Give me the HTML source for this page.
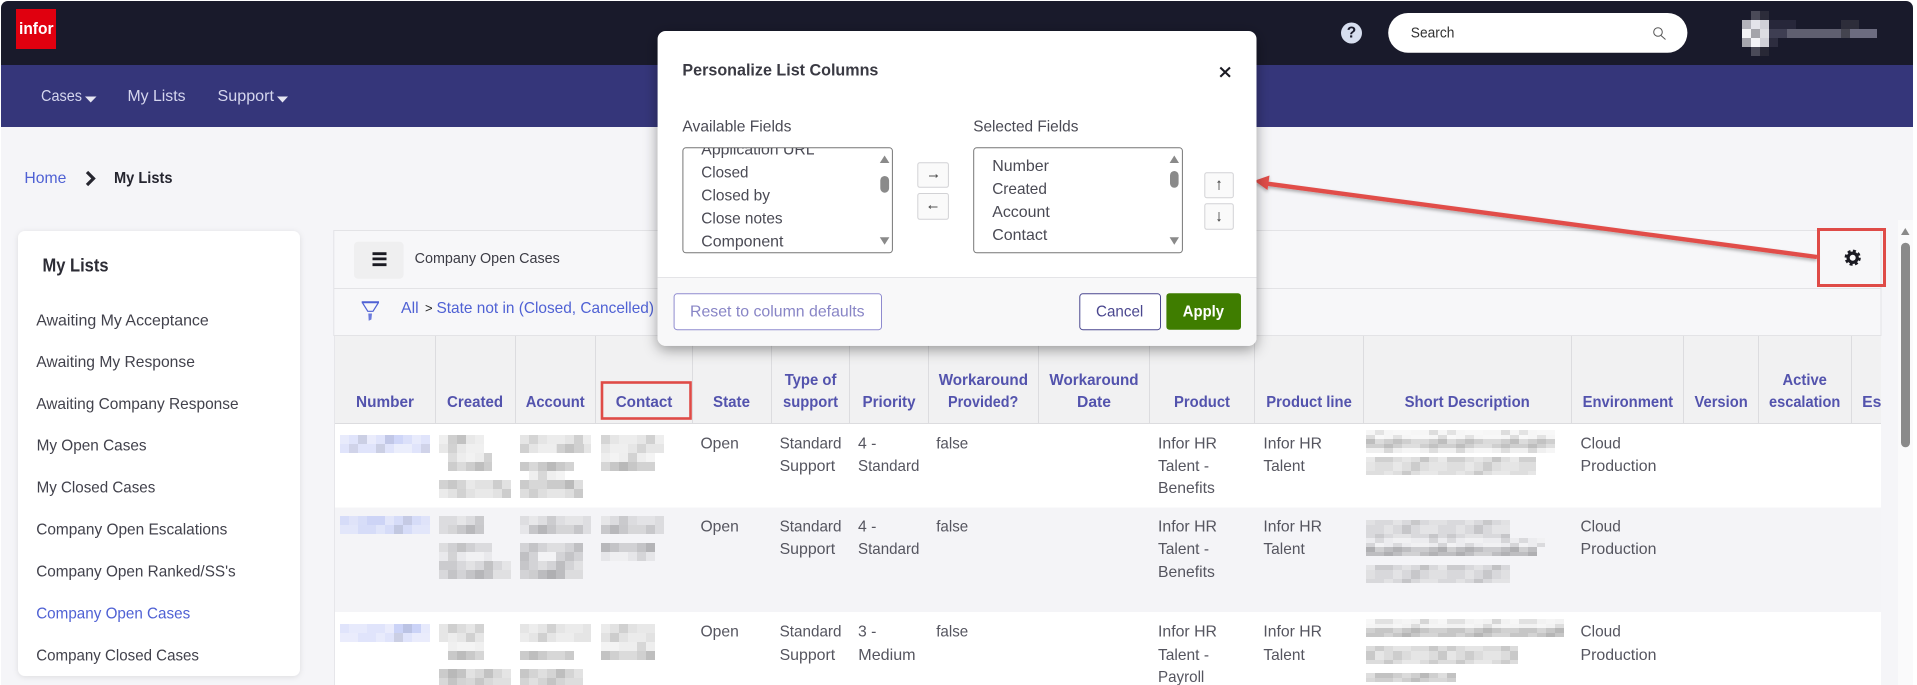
<!DOCTYPE html>
<html><head><meta charset="utf-8"><title>Personalize List Columns</title>
<style>
html,body{margin:0;padding:0;background:#fff;width:1917px;height:685px;overflow:hidden}
svg{display:block;font-family:"Liberation Sans",sans-serif}
svg text{transform:translateY(-0.9px)}
.c{font-size:16px;fill:#55555f}
.l{font-size:16px;fill:#42424c}
.h{font-size:16px;font-weight:bold;fill:#5353ad}
.n{font-size:16px;fill:#d5d6ee}
.b{fill:#4f61d4;font-size:16px}
.m{font-size:16px;fill:#4a4a54}
</style></head><body>
<svg width="1917" height="685" viewBox="0 0 1917 685" xmlns="http://www.w3.org/2000/svg">
<defs>
<filter id="sh" x="-10%" y="-10%" width="120%" height="125%"><feDropShadow dx="0" dy="4" stdDeviation="7" flood-color="#000" flood-opacity=".38"/></filter>
<filter id="sc" x="-10%" y="-10%" width="120%" height="120%"><feDropShadow dx="0" dy="1" stdDeviation="3" flood-color="#000" flood-opacity=".1"/></filter>
<filter id="as" x="-5%" y="-20%" width="110%" height="150%"><feDropShadow dx="0" dy="2" stdDeviation="1.5" flood-color="#000" flood-opacity=".3"/></filter>
<clipPath id="lb1"><rect x="683" y="148" width="190" height="104"/></clipPath>
<clipPath id="lb2"><rect x="974" y="148" width="190" height="104"/></clipPath>
<clipPath id="esc"><rect x="1852" y="336" width="29" height="88"/></clipPath>
<pattern id="mos" patternUnits="userSpaceOnUse" x="7" y="3" width="72" height="54">
<rect width="9" height="9" fill="#fff" fill-opacity=".35"/><rect x="18" width="9" height="9" fill="#000" fill-opacity=".08"/><rect x="36" width="18" height="9" fill="#fff" fill-opacity=".3"/><rect x="63" width="9" height="9" fill="#000" fill-opacity=".1"/>
<rect x="9" y="9" width="9" height="9" fill="#000" fill-opacity=".1"/><rect x="27" y="9" width="18" height="9" fill="#fff" fill-opacity=".4"/><rect x="54" y="9" width="9" height="9" fill="#000" fill-opacity=".08"/>
<rect y="18" width="18" height="9" fill="#000" fill-opacity=".07"/><rect x="27" y="18" width="9" height="9" fill="#fff" fill-opacity=".3"/><rect x="45" y="18" width="9" height="9" fill="#000" fill-opacity=".12"/><rect x="63" y="18" width="9" height="9" fill="#fff" fill-opacity=".4"/>
<rect x="18" y="27" width="9" height="9" fill="#fff" fill-opacity=".35"/><rect x="36" y="27" width="9" height="9" fill="#000" fill-opacity=".09"/><rect x="54" y="27" width="18" height="9" fill="#fff" fill-opacity=".25"/>
<rect x="9" y="36" width="9" height="9" fill="#fff" fill-opacity=".3"/><rect x="27" y="36" width="9" height="9" fill="#000" fill-opacity=".1"/><rect x="45" y="36" width="18" height="9" fill="#fff" fill-opacity=".35"/>
<rect y="45" width="9" height="9" fill="#000" fill-opacity=".08"/><rect x="18" y="45" width="18" height="9" fill="#fff" fill-opacity=".3"/><rect x="54" y="45" width="9" height="9" fill="#000" fill-opacity=".1"/>
</pattern>
<g id="blocks">
<rect x="340" y="435" width="90" height="18" fill="#e0e4fb"/><rect x="385" y="435" width="27" height="9" fill="#cfd6f8"/>
<rect x="340" y="516" width="90" height="18" fill="#d6dcf8"/><rect x="358" y="516" width="27" height="9" fill="#cdd4f6"/>
<rect x="340" y="624" width="90" height="18" fill="#e0e4fb"/><rect x="394" y="624" width="27" height="9" fill="#cbd3f7"/>

<rect x="439" y="435" width="45" height="18" fill="#e8e8e8"/><rect x="448" y="435" width="18" height="9" fill="#cfcfcf"/>
<rect x="448" y="453" width="44" height="9" fill="#ededed"/><rect x="448" y="462" width="44" height="9" fill="#cdcdcd"/>
<rect x="439" y="480" width="72" height="18" fill="#e2e2e2"/><rect x="448" y="480" width="18" height="9" fill="#c8c8c8"/>
<rect x="520" y="435" width="71" height="18" fill="#e5e5e5"/><rect x="557" y="444" width="27" height="9" fill="#d0d0d0"/>
<rect x="520" y="462" width="54" height="9" fill="#c9c9c9"/><rect x="529" y="471" width="36" height="9" fill="#efefef"/>
<rect x="520" y="480" width="63" height="18" fill="#dedede"/><rect x="520" y="480" width="54" height="9" fill="#cbcbcb"/>
<rect x="601" y="435" width="63" height="18" fill="#e6e6e6"/><rect x="601" y="453" width="54" height="9" fill="#eeeeee"/><rect x="601" y="462" width="54" height="9" fill="#c7c7c7"/>

<rect x="439" y="516" width="45" height="18" fill="#dcdcdf"/><rect x="448" y="525" width="36" height="9" fill="#c8c8cb"/>
<rect x="439" y="543" width="53" height="9" fill="#d0d0d3"/><rect x="439" y="552" width="53" height="9" fill="#e9e9ec"/>
<rect x="439" y="561" width="72" height="18" fill="#d8d8db"/><rect x="448" y="570" width="45" height="9" fill="#c4c4c7"/>
<rect x="520" y="516" width="71" height="18" fill="#dedee1"/><rect x="529" y="525" width="54" height="9" fill="#c6c6c9"/>
<rect x="520" y="543" width="63" height="36" fill="#d3d3d6"/><rect x="538" y="552" width="18" height="9" fill="#ececef"/><rect x="529" y="570" width="36" height="9" fill="#bcbcbf"/>
<rect x="601" y="516" width="63" height="18" fill="#dcdcdf"/><rect x="601" y="525" width="54" height="9" fill="#c8c8cb"/>
<rect x="601" y="543" width="54" height="9" fill="#c4c4c7"/><rect x="601" y="552" width="54" height="9" fill="#e6e6e9"/>

<rect x="439" y="624" width="45" height="18" fill="#e6e6e6"/><rect x="448" y="624" width="18" height="9" fill="#cfcfcf"/>
<rect x="448" y="642" width="36" height="9" fill="#f0f0f0"/><rect x="448" y="651" width="36" height="9" fill="#c9c9c9"/>
<rect x="439" y="669" width="72" height="16" fill="#d8d8d8"/><rect x="448" y="669" width="18" height="16" fill="#c4c4c4"/>
<rect x="520" y="624" width="71" height="18" fill="#e5e5e5"/><rect x="520" y="651" width="54" height="9" fill="#cbcbcb"/>
<rect x="520" y="669" width="63" height="16" fill="#d4d4d4"/>
<rect x="601" y="624" width="54" height="18" fill="#e2e2e2"/><rect x="601" y="642" width="54" height="9" fill="#eeeeee"/><rect x="601" y="651" width="54" height="9" fill="#d0d0d0"/>

<rect x="1366" y="430" width="189" height="9" fill="#f6f6f6"/><rect x="1366" y="439" width="189" height="9" fill="#cfcfcf"/><rect x="1366" y="448" width="189" height="5" fill="#f0f0f0"/>
<rect x="1366" y="457" width="170" height="18" fill="#dedede"/>
<rect x="1366" y="520" width="144" height="18" fill="#d9d9dc"/><rect x="1366" y="538" width="179" height="9" fill="#ececef"/><rect x="1366" y="547" width="171" height="9" fill="#bebec1"/>
<rect x="1366" y="565" width="144" height="18" fill="#d8d8db"/>
<rect x="1366" y="619" width="198" height="9" fill="#f2f2f2"/><rect x="1366" y="628" width="198" height="9" fill="#c6c6c6"/>
<rect x="1366" y="646" width="152" height="18" fill="#dcdcdc"/>
<rect x="1366" y="673" width="90" height="9" fill="#cfcfcf"/>
</g>
<mask id="bm" maskUnits="userSpaceOnUse" x="330" y="425" width="1250" height="260"><use href="#blocks"/></mask>
</defs>

<rect width="1917" height="685" fill="#fff"/>
<path d="M1 127V8a7 7 0 0 1 7-7H1906a7 7 0 0 1 7 7V127z" fill="#191a2b"/>
<rect x="1" y="65" width="1912" height="62" fill="#35367a"/>
<rect x="1" y="127" width="1912" height="558" fill="#f5f5f8"/>
<rect x="1913" y="127" width="4" height="558" fill="#fff"/>

<!-- logo -->
<rect x="16" y="9" width="40" height="40" fill="#e0000f"/>
<text x="19" y="35" font-size="17" font-weight="bold" fill="#fff" textLength="34.5" lengthAdjust="spacingAndGlyphs">infor</text>

<!-- top right -->
<circle cx="1351.5" cy="33" r="10.5" fill="#d7deef"/>
<text x="1351.5" y="38.5" font-size="15.5" font-weight="bold" fill="#191a2b" text-anchor="middle">?</text>
<rect x="1388.2" y="13" width="299.2" height="39.7" rx="19.8" fill="#fff"/>
<text x="1410.8" y="38.5" font-size="14.5" fill="#333" textLength="43.6" lengthAdjust="spacingAndGlyphs">Search</text>
<circle cx="1658" cy="32" r="4.3" fill="none" stroke="#555" stroke-width="1"/><path d="M1661 35.5L1665.5 39.5" stroke="#555" stroke-width="1"/>
<!-- avatar mosaic -->
<g>
<rect x="1751" y="11" width="9" height="9" fill="#4a4a58"/><rect x="1760" y="11" width="9" height="9" fill="#2c2c3a"/>
<rect x="1742" y="20" width="9" height="9" fill="#b3b3bb"/><rect x="1751" y="20" width="9" height="9" fill="#e4e4ea"/><rect x="1760" y="20" width="9" height="9" fill="#d0d0d8"/>
<rect x="1769" y="20" width="27" height="9" fill="#27273a"/><rect x="1841" y="20" width="18" height="9" fill="#2d2d3a"/>
<rect x="1742" y="29" width="9" height="9" fill="#f2f2f5"/><rect x="1751" y="29" width="9" height="9" fill="#a4a4aa"/><rect x="1760" y="29" width="9" height="9" fill="#dcdce2"/>
<rect x="1769" y="29" width="18" height="9" fill="#3e3e52"/><rect x="1787" y="29" width="54" height="9" fill="#5f5f70"/><rect x="1841" y="29" width="9" height="9" fill="#44444f"/><rect x="1850" y="29" width="27" height="9" fill="#6c6c80"/>
<rect x="1742" y="38" width="9" height="9" fill="#a6a6ae"/><rect x="1751" y="38" width="9" height="9" fill="#f4f4f8"/><rect x="1760" y="38" width="9" height="9" fill="#d0d0d8"/><rect x="1769" y="38" width="9" height="9" fill="#2d2d3f"/>
<rect x="1751" y="47" width="9" height="9" fill="#4a4a58"/><rect x="1760" y="47" width="9" height="9" fill="#282836"/>
</g>

<!-- nav -->
<text x="41" y="102" class="n" textLength="41" lengthAdjust="spacingAndGlyphs">Cases</text>
<path d="M85 96.5H96.5L90.7 102.5z" fill="#e6e6f2"/>
<text x="127.5" y="102" class="n" textLength="58" lengthAdjust="spacingAndGlyphs">My Lists</text>
<text x="217.5" y="102" class="n" textLength="56.5" lengthAdjust="spacingAndGlyphs">Support</text>
<path d="M277 96.5H288L282.5 102.5z" fill="#e6e6f2"/>

<!-- breadcrumb -->
<text x="24.4" y="184" class="b" textLength="42" lengthAdjust="spacingAndGlyphs">Home</text>
<path d="M87 172L93.5 178.5L87 185" fill="none" stroke="#26262f" stroke-width="3.2"/>
<text x="114" y="184" font-size="16" font-weight="bold" fill="#25252f" textLength="58.5" lengthAdjust="spacingAndGlyphs">My Lists</text>

<!-- sidebar -->
<rect x="18" y="231" width="282" height="445" rx="7" fill="#fff" filter="url(#sc)"/>
<text x="42.5" y="272.5" font-size="18" font-weight="bold" fill="#2c2c35" textLength="66" lengthAdjust="spacingAndGlyphs">My Lists</text>
<g>
<text x="36.2" y="326.5" class="l" textLength="172.6" lengthAdjust="spacingAndGlyphs">Awaiting My Acceptance</text>
<text x="36.2" y="368" class="l" textLength="158.7" lengthAdjust="spacingAndGlyphs">Awaiting My Response</text>
<text x="36.2" y="410" class="l" textLength="202.4" lengthAdjust="spacingAndGlyphs">Awaiting Company Response</text>
<text x="36.6" y="451.5" class="l" textLength="110" lengthAdjust="spacingAndGlyphs">My Open Cases</text>
<text x="36.6" y="493.5" class="l" textLength="118.7" lengthAdjust="spacingAndGlyphs">My Closed Cases</text>
<text x="36.2" y="535.5" class="l" textLength="191.1" lengthAdjust="spacingAndGlyphs">Company Open Escalations</text>
<text x="36.2" y="577.5" class="l" textLength="199.5" lengthAdjust="spacingAndGlyphs">Company Open Ranked/SS's</text>
<text x="36.2" y="619.5" class="b" textLength="154" lengthAdjust="spacingAndGlyphs">Company Open Cases</text>
<text x="36.2" y="661.5" class="l" textLength="162.8" lengthAdjust="spacingAndGlyphs">Company Closed Cases</text>
</g>

<!-- panel -->
<rect x="333.8" y="230.5" width="1547.2" height="105" fill="#f7f7f9" stroke="#e3e3e6"/>
<line x1="334" y1="288.5" x2="1881" y2="288.5" stroke="#e3e3e6"/>
<rect x="354" y="241.7" width="49.6" height="37" rx="4" fill="#efeff0"/>
<path d="M372.5 252.3h14v2.8h-14zM372.5 257.5h14v2.8h-14zM372.5 263.3h14v2.8h-14z" fill="#1a1a22"/>
<text x="414.6" y="264" font-size="15" fill="#3c3c45" textLength="145.2" lengthAdjust="spacingAndGlyphs">Company Open Cases</text>
<path d="M361.7 301.2H379V303.2H361.7Z" fill="#4f61d4"/>
<path d="M362.6 303L367.8 311.3H373L378.2 303" fill="none" stroke="#4f61d4" stroke-width="1.2"/>
<path d="M368.3 313.5H372L371.4 319.5L368.7 320.7Z" fill="#6c7bdc"/>
<text x="401" y="314" class="b" textLength="17.6" lengthAdjust="spacingAndGlyphs">All</text>
<text x="425" y="313.5" font-size="13" fill="#222">&gt;</text>
<text x="436.5" y="314" class="b" textLength="217.5" lengthAdjust="spacingAndGlyphs">State not in (Closed, Cancelled)</text>

<!-- table header -->
<rect x="335" y="335.5" width="1546" height="88" fill="#f1f1f2"/>
<rect x="335" y="423" width="1546" height="262" fill="#fff"/>
<rect x="335" y="507.5" width="1546" height="104.5" fill="#f4f4f7"/>
<line x1="335" y1="423.5" x2="1881" y2="423.5" stroke="#dcdcdf"/>
<line x1="335" y1="335.5" x2="1881" y2="335.5" stroke="#e3e3e6"/>
<line x1="334.5" y1="336" x2="334.5" y2="685" stroke="#e6e6ea"/>
<path stroke="#dcdcdf" d="M435.5 336V423M515.5 336V423M595.5 336V423M692.5 336V423M771.5 336V423M849.5 336V423M928.5 336V423M1038.5 336V423M1149.5 336V423M1254.5 336V423M1363.5 336V423M1571.5 336V423M1683.5 336V423M1758.5 336V423M1851.5 336V423"/>

<text x="356" y="407.7" class="h" textLength="58" lengthAdjust="spacingAndGlyphs">Number</text>
<text x="447" y="407.7" class="h" textLength="56" lengthAdjust="spacingAndGlyphs">Created</text>
<text x="525.7" y="407.7" class="h" textLength="59" lengthAdjust="spacingAndGlyphs">Account</text>
<text x="615.7" y="407.7" class="h" textLength="56.7" lengthAdjust="spacingAndGlyphs">Contact</text>
<text x="713" y="407.7" class="h" textLength="37" lengthAdjust="spacingAndGlyphs">State</text>
<text x="784.7" y="385.7" class="h" textLength="51.7" lengthAdjust="spacingAndGlyphs">Type of</text>
<text x="783" y="407.7" class="h" textLength="55" lengthAdjust="spacingAndGlyphs">support</text>
<text x="862.5" y="407.7" class="h" textLength="53" lengthAdjust="spacingAndGlyphs">Priority</text>
<text x="938.7" y="385.7" class="h" textLength="89.3" lengthAdjust="spacingAndGlyphs">Workaround</text>
<text x="948" y="407.7" class="h" textLength="70.3" lengthAdjust="spacingAndGlyphs">Provided?</text>
<text x="1049.4" y="385.7" class="h" textLength="89.2" lengthAdjust="spacingAndGlyphs">Workaround</text>
<text x="1077" y="407.7" class="h" textLength="34" lengthAdjust="spacingAndGlyphs">Date</text>
<text x="1174" y="407.7" class="h" textLength="56" lengthAdjust="spacingAndGlyphs">Product</text>
<text x="1266.3" y="407.7" class="h" textLength="85.5" lengthAdjust="spacingAndGlyphs">Product line</text>
<text x="1404.6" y="407.7" class="h" textLength="125.2" lengthAdjust="spacingAndGlyphs">Short Description</text>
<text x="1582.6" y="407.7" class="h" textLength="90.5" lengthAdjust="spacingAndGlyphs">Environment</text>
<text x="1694.5" y="407.7" class="h" textLength="53.2" lengthAdjust="spacingAndGlyphs">Version</text>
<text x="1782.5" y="385.7" class="h" textLength="44.4" lengthAdjust="spacingAndGlyphs">Active</text>
<text x="1769" y="407.7" class="h" textLength="71.3" lengthAdjust="spacingAndGlyphs">escalation</text>
<g clip-path="url(#esc)"><text x="1862.1" y="407.7" class="h" textLength="28" lengthAdjust="spacingAndGlyphs">Esc</text></g>

<!-- blurred cells -->
<use href="#blocks"/>
<rect x="330" y="425" width="1250" height="260" fill="url(#mos)" mask="url(#bm)"/>

<!-- row text -->
<g>
<text x="700.5" y="449.5" class="c" textLength="38.3" lengthAdjust="spacingAndGlyphs">Open</text>
<text x="779.6" y="449.5" class="c" textLength="61.9" lengthAdjust="spacingAndGlyphs">Standard</text>
<text x="779.6" y="472" class="c" textLength="55.6" lengthAdjust="spacingAndGlyphs">Support</text>
<text x="858" y="449.5" class="c" textLength="18.4" lengthAdjust="spacingAndGlyphs">4 -</text>
<text x="858" y="472" class="c" textLength="61.4" lengthAdjust="spacingAndGlyphs">Standard</text>
<text x="936.2" y="449.5" class="c" textLength="32" lengthAdjust="spacingAndGlyphs">false</text>
<text x="1158" y="449.5" class="c" textLength="59" lengthAdjust="spacingAndGlyphs">Infor HR</text>
<text x="1158" y="472" class="c" textLength="51" lengthAdjust="spacingAndGlyphs">Talent -</text>
<text x="1158" y="494" class="c" textLength="56.8" lengthAdjust="spacingAndGlyphs">Benefits</text>
<text x="1263.4" y="449.5" class="c" textLength="58.6" lengthAdjust="spacingAndGlyphs">Infor HR</text>
<text x="1263.4" y="472" class="c" textLength="41.4" lengthAdjust="spacingAndGlyphs">Talent</text>
<text x="1580.5" y="449.5" class="c" textLength="40.3" lengthAdjust="spacingAndGlyphs">Cloud</text>
<text x="1580.5" y="472" class="c" textLength="75.9" lengthAdjust="spacingAndGlyphs">Production</text>

<text x="700.5" y="532.5" class="c" textLength="38.3" lengthAdjust="spacingAndGlyphs">Open</text>
<text x="779.6" y="532.5" class="c" textLength="61.9" lengthAdjust="spacingAndGlyphs">Standard</text>
<text x="779.6" y="555" class="c" textLength="55.6" lengthAdjust="spacingAndGlyphs">Support</text>
<text x="858" y="532.5" class="c" textLength="18.4" lengthAdjust="spacingAndGlyphs">4 -</text>
<text x="858" y="555" class="c" textLength="61.4" lengthAdjust="spacingAndGlyphs">Standard</text>
<text x="936.2" y="532.5" class="c" textLength="32" lengthAdjust="spacingAndGlyphs">false</text>
<text x="1158" y="532.5" class="c" textLength="59" lengthAdjust="spacingAndGlyphs">Infor HR</text>
<text x="1158" y="555" class="c" textLength="51" lengthAdjust="spacingAndGlyphs">Talent -</text>
<text x="1158" y="578" class="c" textLength="56.8" lengthAdjust="spacingAndGlyphs">Benefits</text>
<text x="1263.4" y="532.5" class="c" textLength="58.6" lengthAdjust="spacingAndGlyphs">Infor HR</text>
<text x="1263.4" y="555" class="c" textLength="41.4" lengthAdjust="spacingAndGlyphs">Talent</text>
<text x="1580.5" y="532.5" class="c" textLength="40.3" lengthAdjust="spacingAndGlyphs">Cloud</text>
<text x="1580.5" y="555" class="c" textLength="75.9" lengthAdjust="spacingAndGlyphs">Production</text>

<text x="700.5" y="637.5" class="c" textLength="38.3" lengthAdjust="spacingAndGlyphs">Open</text>
<text x="779.6" y="637.5" class="c" textLength="61.9" lengthAdjust="spacingAndGlyphs">Standard</text>
<text x="779.6" y="661" class="c" textLength="55.6" lengthAdjust="spacingAndGlyphs">Support</text>
<text x="858" y="637.5" class="c" textLength="18.4" lengthAdjust="spacingAndGlyphs">3 -</text>
<text x="858.3" y="661" class="c" textLength="57.3" lengthAdjust="spacingAndGlyphs">Medium</text>
<text x="936.2" y="637.5" class="c" textLength="32" lengthAdjust="spacingAndGlyphs">false</text>
<text x="1158" y="637.5" class="c" textLength="59" lengthAdjust="spacingAndGlyphs">Infor HR</text>
<text x="1158" y="661" class="c" textLength="51" lengthAdjust="spacingAndGlyphs">Talent -</text>
<text x="1158" y="683" class="c" textLength="46.3" lengthAdjust="spacingAndGlyphs">Payroll</text>
<text x="1263.4" y="637.5" class="c" textLength="58.6" lengthAdjust="spacingAndGlyphs">Infor HR</text>
<text x="1263.4" y="661" class="c" textLength="41.4" lengthAdjust="spacingAndGlyphs">Talent</text>
<text x="1580.5" y="637.5" class="c" textLength="40.3" lengthAdjust="spacingAndGlyphs">Cloud</text>
<text x="1580.5" y="661" class="c" textLength="75.9" lengthAdjust="spacingAndGlyphs">Production</text>
</g>

<!-- page scrollbar -->
<rect x="1898" y="220" width="15" height="465" fill="#fafafb"/>
<path d="M1901 235L1905.3 228L1909.5 235z" fill="#8a8a8a"/>
<rect x="1901" y="242.7" width="9" height="204.6" rx="4.5" fill="#8a8a8a"/>

<!-- annotations -->
<rect x="602" y="382.5" width="88.5" height="36" fill="none" stroke="#df4b47" stroke-width="2.6"/>
<g filter="url(#as)">
<path d="M1262 183L1817 257" stroke="#e14d4a" stroke-width="4.4" fill="none"/>
<path d="M1254.4 180.7L1269.5 175.5L1267.5 190z" fill="#e14d4a"/>
</g>
<rect x="1818.5" y="229.5" width="66" height="56" fill="none" stroke="#df4b47" stroke-width="3"/>
<g fill="none" stroke="#1a1a22">
<circle cx="1852.7" cy="257.7" r="4.6" stroke-width="3.2"/>
<circle cx="1852.7" cy="257.7" r="6.8" stroke-width="2.6" stroke-dasharray="3 2.34"/>
</g>

<!-- modal -->
<rect x="657.6" y="31" width="598.9" height="314.7" rx="8" fill="#fff" filter="url(#sh)"/>
<path d="M657.6 277H1256.5V337.7a8 8 0 0 1-8 8H665.6a8 8 0 0 1-8-8z" fill="#f8f8f9"/>
<line x1="657.6" y1="277.5" x2="1256.5" y2="277.5" stroke="#e4e4e7"/>
<text x="682.4" y="76.5" font-size="17" font-weight="bold" fill="#3a3a43" textLength="196" lengthAdjust="spacingAndGlyphs">Personalize List Columns</text>
<path d="M1220.3 67.5L1230 76.7M1230 67.5L1220.3 76.7" stroke="#1a1a22" stroke-width="2.1"/>
<text x="682.4" y="132.3" class="m" textLength="109" lengthAdjust="spacingAndGlyphs">Available Fields</text>
<text x="973.2" y="132.3" class="m" textLength="105.2" lengthAdjust="spacingAndGlyphs">Selected Fields</text>

<rect x="682.9" y="147.8" width="209.5" height="105" rx="3" fill="#fff" stroke="#777"/>
<g clip-path="url(#lb1)">
<text x="701.3" y="155.3" class="m" textLength="113.3" lengthAdjust="spacingAndGlyphs">Application URL</text>
<text x="701.3" y="178.3" class="m" textLength="47.2" lengthAdjust="spacingAndGlyphs">Closed</text>
<text x="701.3" y="201.3" class="m" textLength="68.7" lengthAdjust="spacingAndGlyphs">Closed by</text>
<text x="701.3" y="224.3" class="m" textLength="81.3" lengthAdjust="spacingAndGlyphs">Close notes</text>
<text x="701.3" y="247.3" class="m" textLength="82.1" lengthAdjust="spacingAndGlyphs">Component</text>
</g>
<path d="M879.8 163L884.6 155.5L889.4 163z" fill="#8a8a8a"/>
<rect x="880.3" y="176" width="8.8" height="16.7" rx="4.4" fill="#8a8a8a"/>
<path d="M879.8 237.3L884.6 244.8L889.4 237.3z" fill="#8a8a8a"/>

<rect x="973.7" y="147.8" width="208.7" height="105" rx="3" fill="#fff" stroke="#777"/>
<g clip-path="url(#lb2)">
<text x="992.2" y="171.7" class="m" textLength="56.8" lengthAdjust="spacingAndGlyphs">Number</text>
<text x="992.2" y="194.7" class="m" textLength="54.7" lengthAdjust="spacingAndGlyphs">Created</text>
<text x="992.2" y="217.7" class="m" textLength="57.6" lengthAdjust="spacingAndGlyphs">Account</text>
<text x="992.2" y="240.7" class="m" textLength="55.1" lengthAdjust="spacingAndGlyphs">Contact</text>
<text x="992.2" y="263.7" class="m" textLength="36" lengthAdjust="spacingAndGlyphs">State</text>
</g>
<path d="M1169.6 163L1174.3 155.5L1179 163z" fill="#8a8a8a"/>
<rect x="1170" y="171" width="8.6" height="16.7" rx="4.3" fill="#8a8a8a"/>
<path d="M1169.6 237.3L1174.3 244.8L1179 237.3z" fill="#8a8a8a"/>

<g fill="#fafafa" stroke="#d2d2d5">
<rect x="917.8" y="162.8" width="30.6" height="24.5" rx="2"/>
<rect x="917.8" y="193.5" width="30.6" height="25.8" rx="2"/>
<rect x="1204.8" y="172.8" width="28.5" height="24.9" rx="2"/>
<rect x="1204.8" y="203.8" width="28.5" height="25.5" rx="2"/>
</g>
<g fill="none" stroke="#555" stroke-width=".9">
<path d="M929 176H937.5M935.7 174.5L937.5 176L935.7 177.5"/>
<path d="M929 207H937.5M930.8 205.5L929 207L930.8 208.5"/>
<path d="M1219 181V190M1217.6 182.7L1219 181L1220.4 182.7"/>
<path d="M1219 212V221M1217.6 219.3L1219 221L1220.4 219.3"/>
</g>

<rect x="674.1" y="293.8" width="207.4" height="35.9" rx="3" fill="#fff" stroke="#8f8bcf"/>
<text x="690" y="317.5" font-size="16" fill="#8885c6" textLength="174.6" lengthAdjust="spacingAndGlyphs">Reset to column defaults</text>
<rect x="1079.8" y="293.8" width="80.7" height="35.9" rx="3" fill="#fff" stroke="#4a478f"/>
<text x="1096" y="317.5" font-size="16" fill="#4a478f" textLength="47.3" lengthAdjust="spacingAndGlyphs">Cancel</text>
<rect x="1166.4" y="293.3" width="74.6" height="36.4" rx="3" fill="#3f7d00"/>
<text x="1182.8" y="317.5" font-size="16" font-weight="bold" fill="#fff" textLength="41.2" lengthAdjust="spacingAndGlyphs">Apply</text>
</svg>
</body></html>
